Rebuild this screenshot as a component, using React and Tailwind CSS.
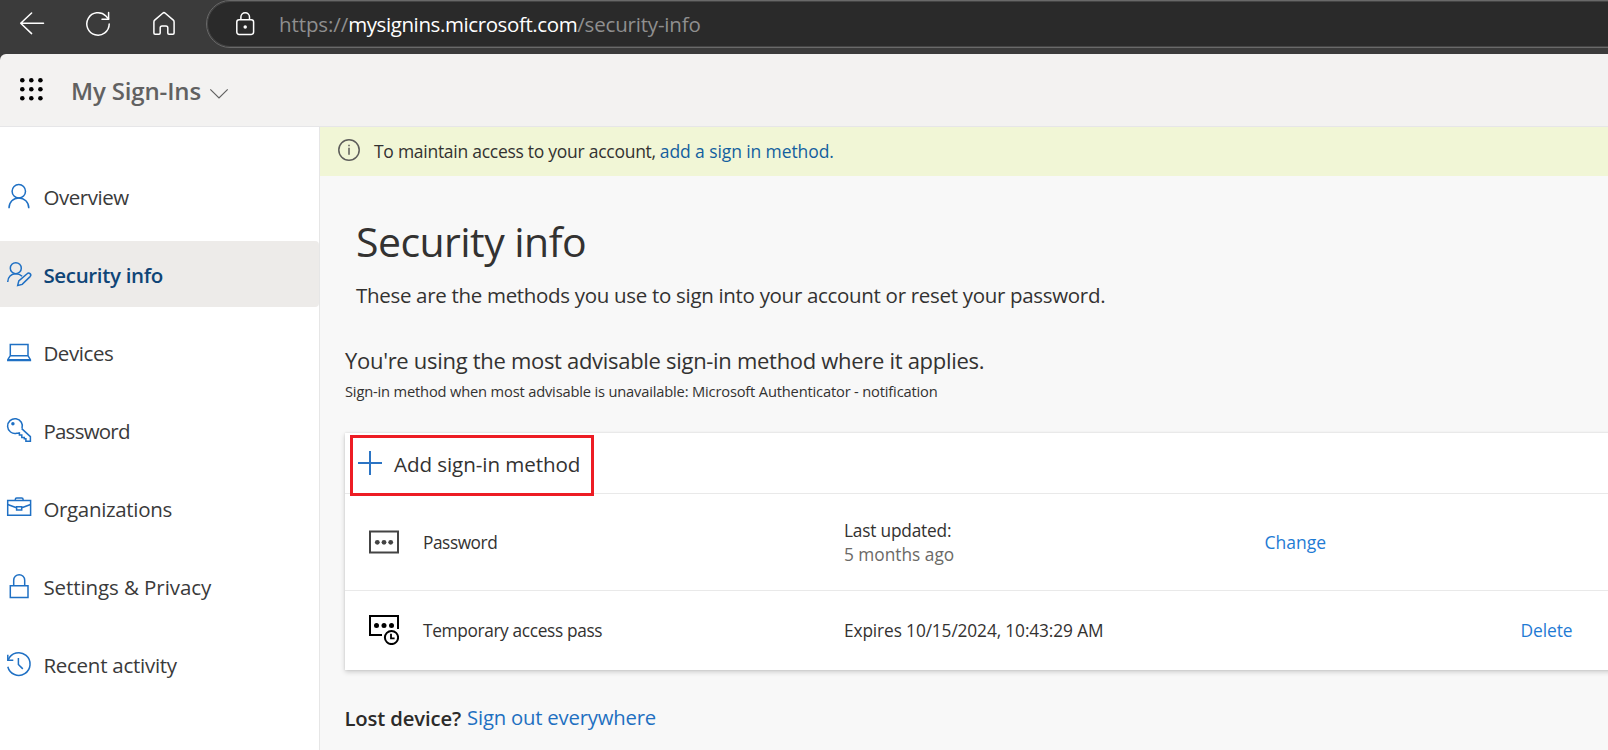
import React from "react";

const stroke = { fill: "none", stroke: "currentColor" };

function BrowserBar() {
  return (
    <div className="flex h-[54px] items-start bg-[#3b3b3b] text-white">
      <div className="flex h-[48px] w-[206px] shrink-0 items-center">
        <svg className="ml-[19px] h-[26px] w-[26px] shrink-0" viewBox="0 0 26 26" {...stroke} strokeWidth="1.5" strokeLinecap="round" strokeLinejoin="round">
          <path d="M24.5 12.3H1.7M12.6 2 1.7 12.3l10.9 10.3" />
        </svg>
        <svg className="ml-[40px] h-[26px] w-[26px] shrink-0" viewBox="0 0 26 26" {...stroke} strokeWidth="1.5" strokeLinecap="round" strokeLinejoin="round">
          <path d="M24.2 13A11.2 11.2 0 1 1 20.9 5L23.6 8" />
          <path d="M23.6 1.5V8.2h-6.6" />
        </svg>
        <svg className="ml-[40px] h-[26px] w-[26px] shrink-0" viewBox="0 0 26 26" {...stroke} strokeWidth="1.5" strokeLinecap="round" strokeLinejoin="round">
          <path d="M2.9 10.9c0-.7.3-1.3.8-1.8l8-6.9c.8-.7 1.8-.7 2.6 0l8 6.9c.5.5.8 1.1.8 1.8v11.2c0 .7-.5 1.2-1.2 1.2h-3.9c-.7 0-1.2-.5-1.2-1.2v-5.3c0-1.1-.8-1.9-1.9-1.9h-3.8c-1.1 0-1.9.8-1.9 1.9v5.3c0 .7-.5 1.2-1.2 1.2H4.1c-.7 0-1.2-.5-1.2-1.2z" />
        </svg>
      </div>
      <div className="flex h-[48px] w-[1460px] shrink-0 items-center rounded-l-[24px] border border-[#696969] bg-[#2a2a2a] shadow-[inset_0_0_0_1px_#444]">
        <svg className="ml-[26px] h-[26px] w-[24px] shrink-0" viewBox="0 0 24 26" {...stroke} strokeWidth="1.5">
          <rect x="3.8" y="8.7" width="16.8" height="14.7" rx="2.3" />
          <path d="M7.9 8.5V6a4.300 4.300 0 0 1 8.600 0v2.500" />
          <circle cx="12.2" cy="16" r="1" fill="currentColor" />
        </svg>
        <div className="-mt-px ml-[22px] whitespace-nowrap text-[20.5px] leading-[30px] text-[#8f8f8f]">
          <span className="tracking-[-0.1px]">https://</span>
          <span className="tracking-[-0.4px] text-white">mysignins.microsoft.com</span>
          <span className="tracking-[-0.18px]">/security-info</span>
        </div>
      </div>
    </div>
  );
}

function AppHeader() {
  return (
    <div className="bg-[#3b3b3b]">
      <header className="flex h-[73px] items-center rounded-tl-[6px] border-b border-[#e6e6e8] bg-[#f3f2f1]">
        <svg className="ml-[19px] h-[24px] w-[24px] shrink-0" viewBox="0 0 24 24" fill="#000">
          {[2.3, 11.3, 20.3].map((y) => [3.3, 12.3, 21.4].map((x) => <circle key={`${x}-${y}`} cx={x} cy={y} r="2.3" />))}
        </svg>
        <div className="ml-[28px] mt-[2px] whitespace-nowrap text-[24px] font-semibold leading-[32px] tracking-[-0.15px] text-[#616161]">My Sign-Ins</div>
        <svg className="ml-[8px] mt-[7px] h-[12px] w-[20px] shrink-0 text-[#616161]" viewBox="0 0 20 12" {...stroke} strokeWidth="1.2">
          <path d="M1.3 1.4 10 10l8.700-8.600" />
        </svg>
      </header>
    </div>
  );
}

const icons = {
  person: (
    <>
      <circle cx="11.8" cy="7.3" r="6.7" />
      <path d="M2 24.2C2 18 6.3 14 11.8 14s10 4 10 10.2" />
    </>
  ),
  personEdit: (
    <>
      <circle cx="8.8" cy="6.2" r="5.5" />
      <path d="M.7 20C.7 15 4.3 11.7 8.8 11.7c2.6 0 4.7.9 6.3 2.5" />
      <path d="M10.7 23.4l1.1-4.5 8.3-7.2a2 2 0 0 1 3 2.9l-7.900 7.800z" />
    </>
  ),
  laptop: <path d="M3.3 15.7V4.6h17.7v11.1M3.3 15.7h17.7l2.4 4v.9H.8v-.9zM.9 19.7h22.5" />,
  key: (
    <>
      <path d="M15 10.5A7.4 7.4 0 1 0 9.7 15.3c1 .1 1.8-.2 2.7-.4v2.2h2.400v2.400h2.500v1.200h1.600v2.600h4.500v-4.700l-8.700-8" />
      <circle cx="5.9" cy="5.8" r="1" fill="currentColor" />
    </>
  ),
  briefcase: (
    <>
      <path d="M.7 4.6h22.9v14.7H.7zM8.3 4.6V3.5c0-.9.5-1.4 1.4-1.4h5c.9 0 1.4.5 1.4 1.4v1.1" />
      <path d="M.7 8.5l8.8 3.3M23.6 8.5l-8.8 3.3M9.6 10.7h5.1v3.2H9.6z" />
    </>
  ),
  lock: <path d="M3.3 11.7h17.7v11.9H3.3zM6.7 11.7V6.2a5.5 5.5 0 0 1 11 0v5.5" />,
  history: (
    <>
      <path d="M1.3 7.8A11.3 11.3 0 1 1 .8 14.8" />
      <path d="M.8 2.8v5.4h5.5M11.4 6v6.5l4.4 4.4" />
    </>
  ),
};

const navItems = [
  { label: "Overview", icon: "person", cls: "tracking-[-0.45px] text-[#3a3a3a]" },
  { label: "Security info", icon: "personEdit", cls: "tracking-[-0.33px] font-semibold text-[#0f4577]", active: true },
  { label: "Devices", icon: "laptop", cls: "tracking-[-0.4px] text-[#3a3a3a]" },
  { label: "Password", icon: "key", cls: "tracking-[-0.75px] text-[#3a3a3a]" },
  { label: "Organizations", icon: "briefcase", cls: "tracking-[-0.33px] text-[#3a3a3a]" },
  { label: "Settings & Privacy", icon: "lock", cls: "tracking-[-0.08px] text-[#3a3a3a]" },
  { label: "Recent activity", icon: "history", cls: "tracking-[-0.26px] text-[#3a3a3a]" },
];

function Sidebar() {
  return (
    <nav className="flex w-[320px] shrink-0 flex-col gap-3 border-r border-[#e6e6e6] bg-white pt-[36px]">
      {navItems.map((n) => (
        <div key={n.label} className={`flex h-[66px] items-center rounded-r-[4px] pl-[7.4px] ${n.active ? "bg-[#edebe9]" : ""}`}>
          <svg className="h-[24px] w-[24px] shrink-0 overflow-visible text-[#1f70c4]" viewBox="0 0 24 24" {...stroke} strokeWidth="1.5">
            {icons[n.icon]}
          </svg>
          <span className={`ml-[12px] mt-px whitespace-nowrap text-[20.5px] leading-[28px] ${n.cls}`}>{n.label}</span>
        </div>
      ))}
    </nav>
  );
}

function MethodsCard() {
  return (
    <section className="relative ml-[25px] mt-[32px] flex w-[1340px] flex-col bg-white text-[17.3px] leading-[24px] text-[#333231] shadow-[0_2px_5px_rgba(0,0,0,0.18),0_0_2px_rgba(0,0,0,0.1)]">
      <div className="flex h-[61px] items-center border-b border-[#e9e9e9] pl-[13px]">
        <svg className="h-[24px] w-[24px] shrink-0 text-[#2b74c4]" viewBox="0 0 24 24" {...stroke} strokeWidth="2">
          <path d="M12 0v24M0 12h24" />
        </svg>
        <span className="ml-[12px] mt-[2px] whitespace-nowrap text-[20.6px] leading-[28px] tracking-[-0.08px]">Add sign-in method</span>
      </div>
      <div className="flex h-[97px] items-center border-b border-[#e9e9e9] pl-[24px]">
        <svg className="h-[24px] w-[30px] shrink-0" viewBox="0 0 30 24" fill="#444" stroke="#444">
          <rect x="1" y="1.5" width="28" height="21" fill="none" strokeWidth="2" />
          <g stroke="none"><circle cx="8.3" cy="12.3" r="2.4" /><circle cx="15" cy="12.3" r="2.4" /><circle cx="21.7" cy="12.3" r="2.4" /></g>
        </svg>
        <span className="ml-[24px] mt-[2px] w-[421px] shrink-0 tracking-[-0.45px]">Password</span>
        <div className="mt-[2px] w-[420.500px] shrink-0">
          <div className="tracking-[-0.2px]">Last updated:</div>
          <div className="text-[#6b6966]">5 months ago</div>
        </div>
        <span className="-mt-px text-[17.5px] text-[#1f7bd4]">Change</span>
      </div>
      <div className="flex h-[79px] items-center pl-[24px]">
        <svg className="-mt-px h-[30px] w-[30px] shrink-0" viewBox="0 0 30 30" fill="none" stroke="#000" strokeWidth="2">
          <path d="M13 20H1V1h28v13" />
          <g fill="#000" stroke="none"><circle cx="7.5" cy="10.5" r="2.5" /><circle cx="15" cy="10.5" r="2.5" /><circle cx="22.5" cy="10.5" r="2.5" /></g>
          <circle cx="22.5" cy="22.5" r="6.6" />
          <path d="M22 18.7v4.6h3.6" strokeWidth="1.8" />
        </svg>
        <span className="ml-[24px] w-[421px] shrink-0 tracking-[-0.35px]">Temporary access pass</span>
        <span className="w-[676.500px] shrink-0 tracking-[-0.12px]">Expires 10/15/2024, 10:43:29 AM</span>
        <span className="-mt-[2px] text-[17.4px] tracking-[-0.1px] text-[#1f7bd4]">Delete</span>
      </div>
      <div className="absolute left-[5px] top-[2px] h-[61px] w-[244px] border-[3px] border-[#ed1c24]" />
    </section>
  );
}

export default function App() {
  return (
    <div className="flex h-[750px] w-full flex-col overflow-hidden bg-[#f8f8f8] font-['Open_Sans','Noto_Sans',sans-serif]">
      <BrowserBar />
      <AppHeader />
      <div className="flex min-h-0 flex-1">
        <Sidebar />
        <main className="flex min-w-0 flex-1 flex-col overflow-hidden whitespace-nowrap text-[#333231]">
          <div className="flex h-[49px] shrink-0 items-center bg-[#f1f6d6] pl-[18px] text-[17.5px] leading-[24px]">
            <svg className="mb-[3px] h-[22px] w-[22px] shrink-0 text-[#5d5d5a]" viewBox="0 0 22 22" {...stroke} strokeWidth="1.5">
              <circle cx="11" cy="11" r="10.2" />
              <path d="M11 8.7v7M11 5.8v1.5" />
            </svg>
            <span className="mb-[2px] ml-[14px] tracking-[-0.27px]">To maintain access to your account,</span>
            <span className="mb-[2px] ml-[4px] tracking-[-0.1px] text-[#135f9f]">add a sign in method.</span>
          </div>
          <h1 className="ml-[36px] mt-[37px] shrink-0 text-[41px] leading-[56px] tracking-[-0.55px]">Security info</h1>
          <p className="ml-[36px] mt-[12px] shrink-0 text-[20.5px] leading-[28px] tracking-[-0.31px]">These are the methods you use to sign into your account or reset your password.</p>
          <p className="ml-[25px] mt-[36px] shrink-0 text-[22px] leading-[30px] tracking-[-0.3px]">You're using the most advisable sign-in method where it applies.</p>
          <p className="ml-[25px] mt-[6px] shrink-0 text-[14.7px] leading-[20px] tracking-[-0.18px]">Sign-in method when most advisable is unavailable: Microsoft Authenticator - notification</p>
          <MethodsCard />
          <div className="ml-[24.5px] mt-[33px] flex shrink-0 text-[20.3px] leading-[28px]">
            <span className="mt-px font-semibold tracking-[-0.15px] text-[#2c2b2a]">Lost device?</span>
            <span className="ml-[6px] tracking-[-0.2px] text-[#1f70c1]">Sign out everywhere</span>
          </div>
        </main>
      </div>
    </div>
  );
}
